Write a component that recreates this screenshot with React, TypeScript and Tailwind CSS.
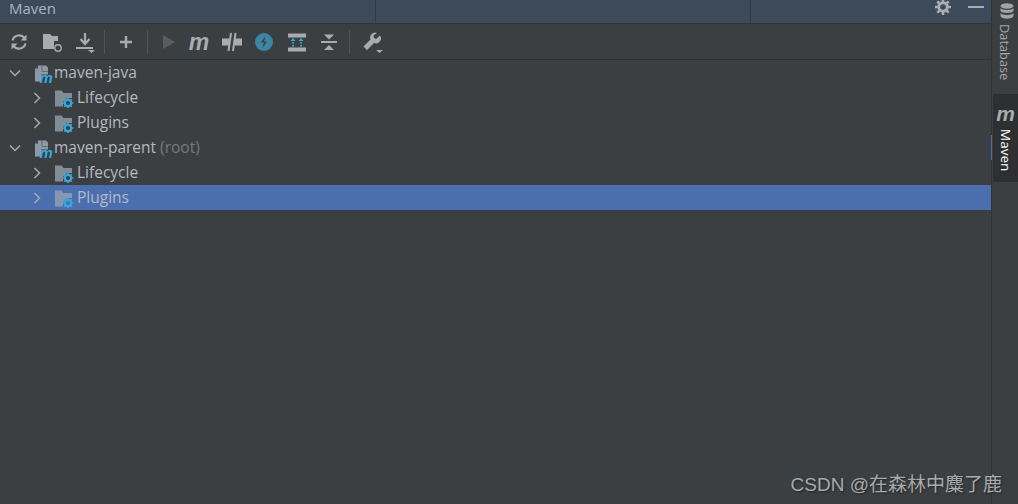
const FONT = "font-['Open_Sans','Noto_Sans',sans-serif]";

function Sep({ className }: { className: string }) {
  return <div className={`w-px h-6 bg-[#515456] shrink-0 ${className}`} />;
}

function ProjectIcon() {
  return (
    <svg width="22" height="28" viewBox="0 -4 22 28" className="shrink-0 -my-1">
      <path d="M5 2.500h8l2 2v7H8v7H2v-13z" fill="#8d9aa3" />
      <path d="M5 2.500v3H2z" fill="#3c3f41" />
      <path d="M9 2.500v6h6" fill="none" stroke="#5f6a72" strokeWidth="1" />
      <text x="6.500" y="20" fontSize="15" fontWeight="700" fontStyle="italic" fill="#35a8dc" fontFamily="'Liberation Sans',sans-serif">m</text>
    </svg>
  );
}

function FolderIcon() {
  return (
    <svg width="20" height="20" viewBox="0 0 20 20" className="shrink-0">
      <path d="M1 2.500h6.500l2 2.500H18v5h-5l-4 4v4.500H1z" fill="#9aa7b1" fillOpacity="0.75" />
      <circle cx="14" cy="15" r="3.200" fill="none" stroke="#35a8dc" strokeWidth="2.200" />
      <path d="M14 9.700v2M14 18.300v2M8.700 15h2M17.300 15h2M10.300 11.300l1.300 1.300M16.400 17.400l1.300 1.300M10.300 18.700l1.300-1.300M16.400 12.600l1.300-1.300" stroke="#35a8dc" strokeWidth="1.600" />
    </svg>
  );
}

function Chevron({ open }: { open: boolean }) {
  return (
    <svg width="12" height="12" viewBox="0 0 12 12" className="shrink-0">
      <path d={open ? "M1 3.500l5 5 5-5" : "M3.500 1l5 5-5 5"} fill="none" stroke="#a6a9ab" strokeWidth="1.500" />
    </svg>
  );
}

function Row({ level, open, label, extra, selected }: { level: 0 | 1; open: boolean; label: string; extra?: string; selected?: boolean }) {
  return (
    <div className={`h-[25px] flex items-center ${level === 0 ? "pl-[9px]" : "pl-[31px]"} ${selected ? "bg-[#4b6eaf]" : ""}`}>
      <Chevron open={open} />
      {level === 0 ? (
        <div className="ml-[12px] mr-[-1px] flex items-center"><ProjectIcon /></div>
      ) : (
        <div className="ml-[11px] mr-[3px]"><FolderIcon /></div>
      )}
      <span className="text-[15.500px] text-[#b3bac0]">
        {label}
        {extra && <span className="text-[#787878]"> {extra}</span>}
      </span>
    </div>
  );
}

function ToolIcon({ children, className }: { children: React.ReactNode; className: string }) {
  return (
    <svg width="24" height="24" viewBox="0 0 24 24" className={`shrink-0 ${className}`}>
      {children}
    </svg>
  );
}

export default function App() {
  return (
    <div className={`relative w-[1018px] h-[504px] overflow-hidden flex bg-[#3c3f41] ${FONT}`}>
      <div className="flex-1 flex flex-col min-w-0">
        <div className="h-6 flex bg-[#3c4a5a] border-b border-[#323232]">
          <div className="w-[376px] border-r border-[#323a44] pl-[9px] text-[15px] leading-[16px] text-[#a9b4bf]">Maven</div>
          <div className="w-[375px] border-r border-[#323a44]" />
          <div className="flex-1 flex items-start justify-end gap-[17px] pr-[7px]">
            <svg width="16" height="16" viewBox="0 0 16 16" className="-mt-px">
              <circle cx="8" cy="8" r="4.300" fill="none" stroke="#a8adb2" strokeWidth="3" />
              <path d="M8 0v3M8 13v3M0 8h3M13 8h3M2.300 2.300l2.200 2.200M11.500 11.500l2.200 2.200M2.300 13.700l2.200-2.200M11.500 4.500l2.200-2.200" stroke="#a8adb2" strokeWidth="2.600" />
            </svg>
            <div className="w-4 h-[2px] mt-[6px] bg-[#a8adb2]" />
          </div>
        </div>
        <div className="h-9 flex items-center pl-[7px] border-b border-[#323232]">
          <ToolIcon className="">
            <path d="M5.500 10.500a6.800 6.800 0 0 1 12-2.500M18.500 13.500a6.800 6.800 0 0 1-12 2.500" fill="none" stroke="#a9abad" strokeWidth="2.200" />
            <path d="M19.500 4.500v6h-6zM4.500 19.500v-6h6z" fill="#a9abad" />
          </ToolIcon>
          <ToolIcon className="ml-[9px]">
            <path d="M3 4h7l2 2h6v5h-4v8H3z" fill="#a9abad" />
            <circle cx="18" cy="18" r="3.200" fill="none" stroke="#a9abad" strokeWidth="1.400" />
          </ToolIcon>
          <ToolIcon className="ml-[9px]">
            <path d="M12 3v10M7.500 9l4.500 5 4.500-5" fill="none" stroke="#a9abad" strokeWidth="2.200" />
            <path d="M3 17h17v2H3z" fill="#a9abad" />
            <path d="M15 20h7l-3.500 3z" fill="#a9abad" />
          </ToolIcon>
          <Sep className="ml-[7px]" />
          <ToolIcon className="ml-[9px]">
            <path d="M12 6v12M6 12h12" stroke="#a9abad" strokeWidth="2.400" />
          </ToolIcon>
          <Sep className="ml-[9px]" />
          <ToolIcon className="ml-[8px]">
            <path d="M7 5l12 7-12 7z" fill="#5a5d5f" />
          </ToolIcon>
          <div className="ml-[7px] w-6 text-center text-[23px] leading-6 font-bold italic text-[#a9abad] font-['Liberation_Sans',sans-serif]">m</div>
          <ToolIcon className="ml-[9px]">
            <path d="M2 8.500h7v7H2zM15 8.500h7v7h-7z" fill="#a9abad" />
            <path d="M11 3l-2.500 18M15.500 3L13 21" stroke="#a9abad" strokeWidth="2" />
          </ToolIcon>
          <ToolIcon className="ml-[8px]">
            <circle cx="12" cy="12" r="9" fill="#3d84a5" />
            <path d="M13.500 6l-4.500 6.500h3L10.500 18l4.500-6.500h-3z" fill="#3c3f41" />
          </ToolIcon>
          <ToolIcon className="ml-[9px]">
            <path d="M3 3.500h18v4H3zM3 17.500h18v4H3z" fill="#a9abad" />
            <path d="M8 17V10M16 17V10" stroke="#35a8dc" strokeWidth="1.500" strokeDasharray="2 1" />
            <path d="M5.500 11L8 8l2.500 3zM13.500 11L16 8l2.500 3z" fill="#35a8dc" />
          </ToolIcon>
          <ToolIcon className="ml-[8px]">
            <path d="M4 11h16v2H4z" fill="#a9abad" />
            <path d="M7 4.500h10L12 9.500zM12 15l5 5H7z" fill="#a9abad" />
          </ToolIcon>
          <Sep className="ml-[8px]" />
          <ToolIcon className="ml-[10px]">
            <path d="M20 5.500l-4 3.500-2-1-.5-2.500 3.500-2.500a5 5 0 0 0-6.500 6.500L3.500 16.500l3.500 3.500 7-7a5 5 0 0 0 6-7.500z" fill="#a9abad" />
            <path d="M16 20h7l-3.500 3z" fill="#a9abad" />
          </ToolIcon>
        </div>
        <div className="flex flex-col">
          <Row level={0} open label="maven-java" />
          <Row level={1} open={false} label="Lifecycle" />
          <Row level={1} open={false} label="Plugins" />
          <Row level={0} open label="maven-parent" extra="(root)" />
          <Row level={1} open={false} label="Lifecycle" />
          <Row level={1} open={false} label="Plugins" selected />
        </div>
      </div>
      <div className="relative w-[27px] shrink-0 flex flex-col border-l border-[#323232] pl-px">
        <div className="h-[94px] flex flex-col items-center pt-[3px]">
          <svg width="14" height="16" viewBox="0 0 14 16" className="shrink-0 ml-[3px]">
            <ellipse cx="7" cy="3" rx="6.500" ry="2.800" fill="#a0a4a7" />
            <path d="M.5 5c1 2.500 12 2.500 13 0v3c-1 2.500-12 2.500-13 0zM.5 10c1 2.500 12 2.500 13 0v3c-1 3.500-12 3.500-13 0z" fill="#a0a4a7" />
          </svg>
          <div className="mt-[5px] mr-[2px] text-[12.800px] leading-[26px] text-[#a6a9ab] [writing-mode:vertical-rl]">Database</div>
        </div>
        <div className="h-[88px] bg-[#2d2f30] flex flex-col items-center pt-[13px]">
          <div className="h-4 text-[21px] leading-[14px] font-bold italic text-[#a9abad] font-['Liberation_Sans',sans-serif]">m</div>
          <div className="mt-[6px] text-[13.500px] leading-[26px] text-[#ffffff] [writing-mode:vertical-rl]">Maven</div>
        </div>
        <div className="absolute left-[-1px] top-[135px] w-px h-[25px] bg-[#4b6eaf]" />
      </div>
      <div className="absolute right-[16px] bottom-[7px] text-[19px] leading-6 text-[#a8aaac] [text-shadow:1px_1px_2px_#222] font-['Liberation_Sans','Noto_Sans_CJK_SC',sans-serif]">CSDN @在森林中麋了鹿</div>
    </div>
  );
}
